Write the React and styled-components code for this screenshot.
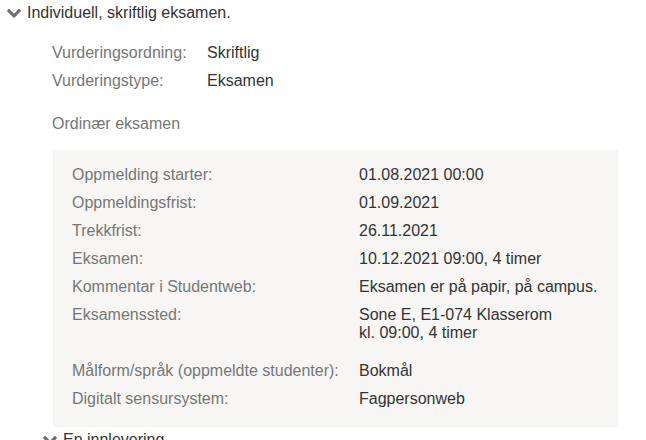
import React from "react";
import styled, { createGlobalStyle } from "styled-components";

const Global = createGlobalStyle`
  html, body { margin: 0; padding: 0; background: #fff; }
  body { font-family: "Liberation Sans", Arial, sans-serif; font-size: 16px; line-height: 18px; color: #333; }
`;

const Page = styled.div`
  width: 646px;
  height: 440px;
  overflow: hidden;
  box-sizing: border-box;
  padding-top: 4px;
`;

const Toggle = styled.div`
  display: flex;
  align-items: center;
  gap: 6px;
  padding-left: ${(p) => p.$indent}px;
  margin-top: ${(p) => p.$top || 0}px;
  color: #333;
  height: 18px;
`;

const Chevron = styled.svg`
  width: 14px;
  height: 9px;
  fill: #6f6f6f;
  flex: none;
  margin-top: 1px;
`;

const Section = styled.div`
  padding-left: 52px;
  padding-top: 17px;
`;

const Pair = styled.div`
  display: grid;
  grid-template-columns: ${(p) => p.$label}px 1fr;
  padding: 5px 0;
  margin-bottom: ${(p) => p.$after || 0}px;
`;

const Label = styled.div`
  color: #767676;
`;

const Value = styled.div`
  color: #333;
`;

const SubHeading = styled.div`
  color: #767676;
  margin-top: 20px;
`;

const Panel = styled.div`
  margin: 17px 28px 0 1px;
  background: #f7f6f5;
  padding: 11px 19px 14px;
`;

function ChevronDown() {
  return (
    <Chevron viewBox="90 552 1612 1016" preserveAspectRatio="none">
      <path d="M1683 808l-742 741q-19 19-45 19t-45-19l-742-741q-19-19-19-45.5t19-45.5l166-165q19-19 45-19t45 19l531 531 531-531q19-19 45-19t45 19l166 165q19 19 19 45.5t-19 45.5z" />
    </Chevron>
  );
}

const exam = [
  ["Oppmelding starter:", ["01.08.2021 00:00"]],
  ["Oppmeldingsfrist:", ["01.09.2021"]],
  ["Trekkfrist:", ["26.11.2021"]],
  ["Eksamen:", ["10.12.2021 09:00, 4 timer"]],
  ["Kommentar i Studentweb:", ["Eksamen er på papir, på campus."]],
  ["Eksamenssted:", ["Sone E, E1-074 Klasserom", "kl. 09:00, 4 timer"], 10],
  ["Målform/språk (oppmeldte studenter):", ["Bokmål"]],
  ["Digitalt sensursystem:", ["Fagpersonweb"]],
];

export default function App() {
  return (
    <Page>
      <Global />
      <Toggle $indent={7}>
        <ChevronDown />
        <span>Individuell, skriftlig eksamen.</span>
      </Toggle>
      <Section>
        <Pair $label={155}>
          <Label>Vurderingsordning:</Label>
          <Value>Skriftlig</Value>
        </Pair>
        <Pair $label={155}>
          <Label>Vurderingstype:</Label>
          <Value>Eksamen</Value>
        </Pair>
        <SubHeading>Ordinær eksamen</SubHeading>
        <Panel>
          {exam.map(([label, lines, after]) => (
            <Pair key={label} $label={287} $after={after}>
              <Label>{label}</Label>
              <Value>
                {lines.map((l) => (
                  <div key={l}>{l}</div>
                ))}
              </Value>
            </Pair>
          ))}
        </Panel>
      </Section>
      <Toggle $indent={43} $top={4}>
        <ChevronDown />
        <span>En innlevering</span>
      </Toggle>
    </Page>
  );
}
